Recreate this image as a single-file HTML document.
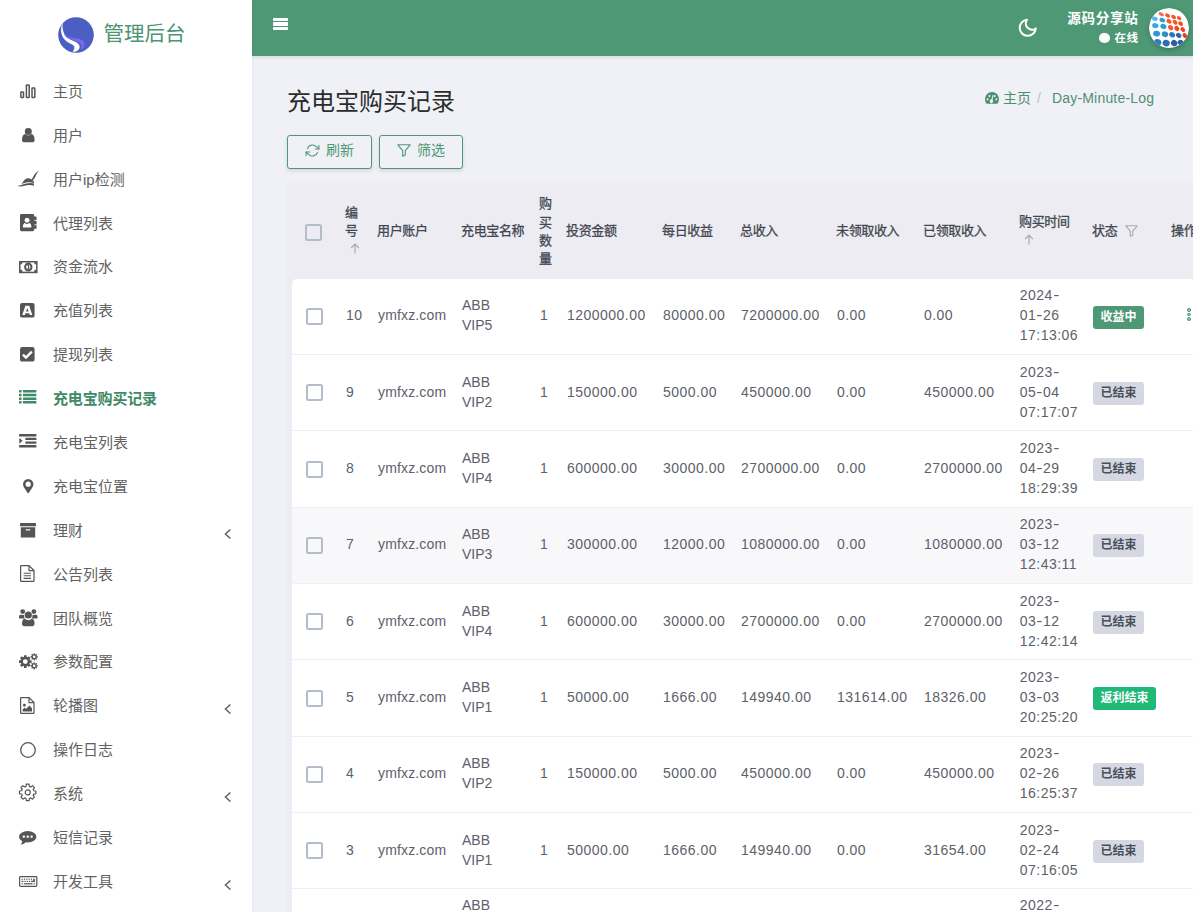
<!DOCTYPE html>
<html lang="zh-CN">
<head>
<meta charset="utf-8">
<title>充电宝购买记录</title>
<style>
*{box-sizing:border-box;margin:0;padding:0}
html,body{width:1193px;height:912px;overflow:hidden}
body{font-family:"Liberation Sans","Noto Sans CJK SC",sans-serif;font-size:14px;color:#414750;background:#eff1f7}
#page{position:relative;width:1193px;height:912px;overflow:hidden}
i{font-style:normal}
/* sidebar */
#side{position:absolute;left:0;top:0;width:252px;height:912px;background:#fff;box-shadow:0 0 4px rgba(40,50,80,.07)}
#logo{position:absolute;left:57.5px;top:16.5px;width:36px;height:36px}
#bt{position:absolute;left:103.4px;top:18.8px;font-size:20.5px;line-height:30px;color:#4c9473;white-space:nowrap}
#side .tx{position:absolute;left:53px;font-size:15px;line-height:22px;color:#626262;white-space:nowrap}
#side .tx.on{color:#3f8a67;font-weight:bold;letter-spacing:-.15px}
/* header */
#top{position:absolute;left:252px;top:0;width:941px;height:56px;background:#4e9876;box-shadow:0 1px 4px rgba(0,0,0,.12)}
#burger{position:absolute;left:20.6px;top:17.5px;width:15.4px;height:14px}
#burger i{display:block;height:3.3px;border-radius:.4px;background:#fff;margin-bottom:1.5px}
#uname{position:absolute;right:54.4px;top:10px;font-size:13.6px;letter-spacing:.7px;line-height:18px;font-weight:bold;color:#fff;white-space:nowrap}
#ustat{position:absolute;right:54.6px;top:29.8px;font-size:11.6px;letter-spacing:.4px;line-height:16px;font-weight:bold;color:#fff;white-space:nowrap}
#ustat i{display:inline-block;width:10.8px;height:10.8px;border-radius:50%;background:#fff;margin-right:4.4px;vertical-align:-1.7px}
#avatar{position:absolute;left:897px;top:8px;width:40px;height:40px;border-radius:50%;box-shadow:0 2px 5px rgba(0,0,0,.22)}
/* content */
#title{position:absolute;left:287px;top:84px;font-size:24px;line-height:36px;color:#2c2c2c;white-space:nowrap}
#crumb{position:absolute;left:985px;top:88px;width:200px;height:20px;font-size:14px;line-height:20px;color:#4c8f70;white-space:nowrap}
#crumb span{position:absolute;top:0}
#crumb .home{left:18px}
#crumb .sep{left:52px;color:#b8c0d0}
#crumb .cur{left:67px;color:#4f8f72;letter-spacing:.18px}
.btn{position:absolute;top:135px;height:34px;border:1px solid #4e9876;border-radius:3px;background:#f0f1f7;color:#4e9876;font-size:14px;box-shadow:0 2px 4px rgba(0,0,0,.12);white-space:nowrap}
.btn span{position:absolute;top:4.2px;line-height:20px}
/* table */
#tbl{position:absolute;left:287px;top:183px;width:920px;height:740px;background:#edecf2;border-radius:3px}
#rows{position:absolute;left:292px;top:279px;width:915px;height:700px;background:#fff;border-radius:5px 0 0 0;overflow:hidden}
#thead{position:absolute;left:0;top:0;width:1193px;height:0}
.th{position:absolute;font-size:13px;line-height:20px;font-weight:normal;-webkit-text-stroke:.28px #414750;color:#414750;white-space:nowrap;letter-spacing:-.35px}
.row{position:absolute;left:0;width:915px;border-bottom:1px solid #eef0f7}
.row.hv{background:#f8f8fa}
.c{position:absolute;font-size:14px;line-height:20px;color:#5d6169;white-space:nowrap}
.c.n{letter-spacing:.47px}
.c.u{letter-spacing:.15px}
.c i{letter-spacing:0;display:inline-block;margin:0 1.2px 0 .8px;transform:scaleX(1.3)}
.cb{position:absolute;width:17px;height:17px;border:2px solid #b3bdc9;border-radius:2.5px;background:transparent}
.bd{position:absolute;height:23px;border-radius:3px;font-size:12px;line-height:23.6px;font-weight:bold;padding:0 7.5px;white-space:nowrap}
.bd.g{background:#4e9876;color:#fff}
.bd.s{background:#21b978;color:#fff}
.bd.e{background:#d5d8e2;color:#4a505a}
.dot{display:block;width:3.5px;height:3.5px;border-radius:50%;border:1.35px solid #4a9270;background:#8fc0a8;margin-bottom:1.1px}
</style>
</head>
<body>
<div id="page">
<div id="tbl"></div>
<div id="rows">
<div class="row" style="top:0.0px;height:76px"><i class="cb" style="left:14px;top:29px"></i><span class="c n" style="left:54px;top:26.0px">10</span><span class="c u" style="left:86px;top:26.0px">ymfxz.com</span><span class="c" style="left:170px;top:16.0px">ABB</span><span class="c" style="left:170px;top:36.0px">VIP5</span><span class="c n" style="left:248px;top:26.0px">1</span><span class="c n" style="left:275px;top:26.0px">1200000.00</span><span class="c n" style="left:371px;top:26.0px">80000.00</span><span class="c n" style="left:449px;top:26.0px">7200000.00</span><span class="c n" style="left:545px;top:26.0px">0.00</span><span class="c n" style="left:632px;top:26.0px">0.00</span><span class="c n" style="left:727.8px;top:6.0px">2024<i>-</i></span><span class="c n" style="left:727.8px;top:26.0px">01<i>-</i>26</span><span class="c n" style="left:727.8px;top:46.0px">17:13:06</span><span class="bd g" style="left:801px;top:27px">收益中</span><span style="position:absolute;left:895px;top:29.3px;width:3.6px;height:14px"><i class="dot"></i><i class="dot"></i><i class="dot"></i></span></div>
<div class="row" style="top:76.0px;height:76px"><i class="cb" style="left:14px;top:29px"></i><span class="c n" style="left:54px;top:27.0px">9</span><span class="c u" style="left:86px;top:27.0px">ymfxz.com</span><span class="c" style="left:170px;top:17.0px">ABB</span><span class="c" style="left:170px;top:37.0px">VIP2</span><span class="c n" style="left:248px;top:27.0px">1</span><span class="c n" style="left:275px;top:27.0px">150000.00</span><span class="c n" style="left:371px;top:27.0px">5000.00</span><span class="c n" style="left:449px;top:27.0px">450000.00</span><span class="c n" style="left:545px;top:27.0px">0.00</span><span class="c n" style="left:632px;top:27.0px">450000.00</span><span class="c n" style="left:727.8px;top:7.0px">2023<i>-</i></span><span class="c n" style="left:727.8px;top:27.0px">05<i>-</i>04</span><span class="c n" style="left:727.8px;top:47.0px">07:17:07</span><span class="bd e" style="left:801px;top:27px">已结束</span></div>
<div class="row" style="top:152.0px;height:77px"><i class="cb" style="left:14px;top:30px"></i><span class="c n" style="left:54px;top:27.0px">8</span><span class="c u" style="left:86px;top:27.0px">ymfxz.com</span><span class="c" style="left:170px;top:17.0px">ABB</span><span class="c" style="left:170px;top:37.0px">VIP4</span><span class="c n" style="left:248px;top:27.0px">1</span><span class="c n" style="left:275px;top:27.0px">600000.00</span><span class="c n" style="left:371px;top:27.0px">30000.00</span><span class="c n" style="left:449px;top:27.0px">2700000.00</span><span class="c n" style="left:545px;top:27.0px">0.00</span><span class="c n" style="left:632px;top:27.0px">2700000.00</span><span class="c n" style="left:727.8px;top:7.0px">2023<i>-</i></span><span class="c n" style="left:727.8px;top:27.0px">04<i>-</i>29</span><span class="c n" style="left:727.8px;top:47.0px">18:29:39</span><span class="bd e" style="left:801px;top:27px">已结束</span></div>
<div class="row hv" style="top:229.0px;height:76px"><i class="cb" style="left:14px;top:29px"></i><span class="c n" style="left:54px;top:26.0px">7</span><span class="c u" style="left:86px;top:26.0px">ymfxz.com</span><span class="c" style="left:170px;top:16.0px">ABB</span><span class="c" style="left:170px;top:36.0px">VIP3</span><span class="c n" style="left:248px;top:26.0px">1</span><span class="c n" style="left:275px;top:26.0px">300000.00</span><span class="c n" style="left:371px;top:26.0px">12000.00</span><span class="c n" style="left:449px;top:26.0px">1080000.00</span><span class="c n" style="left:545px;top:26.0px">0.00</span><span class="c n" style="left:632px;top:26.0px">1080000.00</span><span class="c n" style="left:727.8px;top:6.0px">2023<i>-</i></span><span class="c n" style="left:727.8px;top:26.0px">03<i>-</i>12</span><span class="c n" style="left:727.8px;top:46.0px">12:43:11</span><span class="bd e" style="left:801px;top:26px">已结束</span></div>
<div class="row" style="top:305.0px;height:76px"><i class="cb" style="left:14px;top:29px"></i><span class="c n" style="left:54px;top:27.0px">6</span><span class="c u" style="left:86px;top:27.0px">ymfxz.com</span><span class="c" style="left:170px;top:17.0px">ABB</span><span class="c" style="left:170px;top:37.0px">VIP4</span><span class="c n" style="left:248px;top:27.0px">1</span><span class="c n" style="left:275px;top:27.0px">600000.00</span><span class="c n" style="left:371px;top:27.0px">30000.00</span><span class="c n" style="left:449px;top:27.0px">2700000.00</span><span class="c n" style="left:545px;top:27.0px">0.00</span><span class="c n" style="left:632px;top:27.0px">2700000.00</span><span class="c n" style="left:727.8px;top:7.0px">2023<i>-</i></span><span class="c n" style="left:727.8px;top:27.0px">03<i>-</i>12</span><span class="c n" style="left:727.8px;top:47.0px">12:42:14</span><span class="bd e" style="left:801px;top:27px">已结束</span></div>
<div class="row" style="top:381.0px;height:77px"><i class="cb" style="left:14px;top:30px"></i><span class="c n" style="left:54px;top:27.0px">5</span><span class="c u" style="left:86px;top:27.0px">ymfxz.com</span><span class="c" style="left:170px;top:17.0px">ABB</span><span class="c" style="left:170px;top:37.0px">VIP1</span><span class="c n" style="left:248px;top:27.0px">1</span><span class="c n" style="left:275px;top:27.0px">50000.00</span><span class="c n" style="left:371px;top:27.0px">1666.00</span><span class="c n" style="left:449px;top:27.0px">149940.00</span><span class="c n" style="left:545px;top:27.0px">131614.00</span><span class="c n" style="left:632px;top:27.0px">18326.00</span><span class="c n" style="left:727.8px;top:7.0px">2023<i>-</i></span><span class="c n" style="left:727.8px;top:27.0px">03<i>-</i>03</span><span class="c n" style="left:727.8px;top:47.0px">20:25:20</span><span class="bd s" style="left:801px;top:27px">返利结束</span></div>
<div class="row" style="top:458.0px;height:76px"><i class="cb" style="left:14px;top:29px"></i><span class="c n" style="left:54px;top:26.0px">4</span><span class="c u" style="left:86px;top:26.0px">ymfxz.com</span><span class="c" style="left:170px;top:16.0px">ABB</span><span class="c" style="left:170px;top:36.0px">VIP2</span><span class="c n" style="left:248px;top:26.0px">1</span><span class="c n" style="left:275px;top:26.0px">150000.00</span><span class="c n" style="left:371px;top:26.0px">5000.00</span><span class="c n" style="left:449px;top:26.0px">450000.00</span><span class="c n" style="left:545px;top:26.0px">0.00</span><span class="c n" style="left:632px;top:26.0px">450000.00</span><span class="c n" style="left:727.8px;top:6.0px">2023<i>-</i></span><span class="c n" style="left:727.8px;top:26.0px">02<i>-</i>26</span><span class="c n" style="left:727.8px;top:46.0px">16:25:37</span><span class="bd e" style="left:801px;top:26px">已结束</span></div>
<div class="row" style="top:534.0px;height:76px"><i class="cb" style="left:14px;top:29px"></i><span class="c n" style="left:54px;top:27.0px">3</span><span class="c u" style="left:86px;top:27.0px">ymfxz.com</span><span class="c" style="left:170px;top:17.0px">ABB</span><span class="c" style="left:170px;top:37.0px">VIP1</span><span class="c n" style="left:248px;top:27.0px">1</span><span class="c n" style="left:275px;top:27.0px">50000.00</span><span class="c n" style="left:371px;top:27.0px">1666.00</span><span class="c n" style="left:449px;top:27.0px">149940.00</span><span class="c n" style="left:545px;top:27.0px">0.00</span><span class="c n" style="left:632px;top:27.0px">31654.00</span><span class="c n" style="left:727.8px;top:7.0px">2023<i>-</i></span><span class="c n" style="left:727.8px;top:27.0px">02<i>-</i>24</span><span class="c n" style="left:727.8px;top:47.0px">07:16:05</span><span class="bd e" style="left:801px;top:27px">已结束</span></div>
<div class="row" style="top:610.0px;height:77px"><span class="c" style="left:170px;top:6.0px">ABB</span><span class="c n" style="left:727.8px;top:6.0px">2022<i>-</i></span></div>
</div>
<div id="thead">
<i class="cb" style="left:305px;top:224px"></i>
<span class="th" style="left:345px;top:203px">编</span>
<span class="th" style="left:345px;top:221.4px">号</span>
<span class="th" style="left:377px;top:221.4px">用户账户</span>
<span class="th" style="left:461px;top:221.4px">充电宝名称</span>
<span class="th" style="left:539px;top:194.4px">购</span>
<span class="th" style="left:539px;top:212.6px">买</span>
<span class="th" style="left:539px;top:231px">数</span>
<span class="th" style="left:539px;top:249.4px">量</span>
<span class="th" style="left:566px;top:221.4px">投资金额</span>
<span class="th" style="left:662px;top:221.4px">每日收益</span>
<span class="th" style="left:740px;top:221.4px">总收入</span>
<span class="th" style="left:836px;top:221.4px">未领取收入</span>
<span class="th" style="left:923px;top:221.4px">已领取收入</span>
<span class="th" style="left:1019px;top:212.4px">购买时间</span>
<span class="th" style="left:1092px;top:221.4px">状态</span>
<span class="th" style="left:1171px;top:221.4px">操作</span>
<svg style="position:absolute;left:350px;top:243px;width:10px;height:11px;overflow:visible" viewBox="0 0 10 11" ><path d="M5 10.5 V1.2 M1.2 5 L5 1.2 L8.8 5" fill="none" stroke="#a4abb9" stroke-width="1.2"/></svg>
<svg style="position:absolute;left:1024px;top:234.3px;width:10px;height:11px;overflow:visible" viewBox="0 0 10 11" ><path d="M5 10.5 V1.2 M1.2 5 L5 1.2 L8.8 5" fill="none" stroke="#a4abb9" stroke-width="1.2"/></svg>
<svg style="position:absolute;left:1125px;top:225px;width:13px;height:12px;overflow:visible" viewBox="0 0 13 12" ><path d="M0.8 0.8 H12.2 L7.7 6.2 V10.2 L5.3 11.2 V6.2Z" fill="none" stroke="#a4abb9" stroke-width="1.1" stroke-linejoin="round"/></svg>
</div>
<div id="title">充电宝购买记录</div>
<div id="crumb"><svg style="position:absolute;left:0px;top:4px;width:14px;height:12px;overflow:visible" viewBox="0 0 14 12" class="ci"><path fill="#4c8f70" fill-rule="evenodd" d="M7 0 A7 7 0 0 1 14 7 C14 8.6 13.5 10 12.7 11.2 Q12.3 11.8 11.6 11.8 H2.4 Q1.7 11.8 1.3 11.2 C0.5 10 0 8.6 0 7 A7 7 0 0 1 7 0Z M2.6 6.2 a1 1 0 1 0 0.01 0Z M4.4 2.9 a1 1 0 1 0 0.01 0Z M11.4 6.2 a1 1 0 1 0 0.01 0Z M9.6 2.9 a1 1 0 1 0 0.01 0Z M7.6 3 L6.3 7.6 a1.7 1.7 0 1 0 1.2 0.3 L8.4 3.2Z"/></svg><span class="home">主页</span><span class="sep">/</span><span class="cur">Day-Minute-Log</span></div>
<div class="btn" style="left:287px;width:85px"><svg style="position:absolute;left:17px;top:8.3px;width:15px;height:13px;overflow:visible" viewBox="0 0 15 13" ><g fill="none" stroke="#4e9876" stroke-width="1.1" stroke-linecap="round" stroke-linejoin="round"><path d="M13.9 1.4 V5 H10.3"/><path d="M1.1 11.6 V8 H4.7"/><path d="M2.4 4.6 A5.4 5.4 0 0 1 11.4 2.7 L13.9 5"/><path d="M12.6 8.4 A5.4 5.4 0 0 1 3.6 10.3 L1.1 8"/></g></svg><span style="left:38px">刷新</span></div>
<div class="btn" style="left:379px;width:84px"><svg style="position:absolute;left:16.5px;top:8.3px;width:14px;height:13px;overflow:visible" viewBox="0 0 14 13" ><path d="M0.8 0.8 H13.2 L8.3 6.6 V11 L5.7 12.2 V6.6Z" fill="none" stroke="#4e9876" stroke-width="1.1" stroke-linejoin="round"/></svg><span style="left:37px">筛选</span></div>
<div id="top">
  <div id="burger"><i></i><i></i><i></i></div>
  <svg style="position:absolute;left:765px;top:17.2px;width:21.5px;height:21.5px;overflow:visible" viewBox="0 0 24 24" ><path d="M21 12.79A9 9 0 1 1 11.21 3 7 7 0 0 0 21 12.79z" fill="none" stroke="#fff" stroke-width="2.3" stroke-linejoin="round" stroke-linecap="round"/></svg>
  <div id="uname">源码分享站</div>
  <div id="ustat"><i></i>在线</div>
  <svg id="avatar" viewBox="0 0 40 40"><defs><clipPath id="avc"><circle cx="20" cy="20" r="20"/></clipPath></defs><g clip-path="url(#avc)"><rect width="40" height="40" fill="#fff"/><ellipse cx="12.3" cy="6.2" rx="2.9" ry="1.7" fill="#f3714a" transform="rotate(28 12.3 6.2)"/><ellipse cx="18.6" cy="7.5" rx="2.8" ry="1.8" fill="#f25a30" transform="rotate(32 18.6 7.5)"/><ellipse cx="24.6" cy="9.0" rx="2.7" ry="1.8" fill="#f2552b" transform="rotate(34 24.6 9.0)"/><ellipse cx="30.1" cy="10.2" rx="2.5" ry="1.7" fill="#f25a30" transform="rotate(36 30.1 10.2)"/><ellipse cx="5.8" cy="10.8" rx="3.0" ry="2.1" fill="#56b7e8" transform="rotate(15 5.8 10.8)"/><ellipse cx="13.3" cy="12.1" rx="2.9" ry="2.1" fill="#27a0da" transform="rotate(22 13.3 12.1)"/><ellipse cx="20" cy="13.3" rx="2.8" ry="2.1" fill="#f25c33" transform="rotate(35 20 13.3)"/><ellipse cx="26.1" cy="14.3" rx="2.7" ry="2.0" fill="#f2552b" transform="rotate(40 26.1 14.3)"/><ellipse cx="31.6" cy="15.7" rx="2.6" ry="1.9" fill="#f04a22" transform="rotate(42 31.6 15.7)"/><ellipse cx="6.3" cy="17.6" rx="3.2" ry="2.5" fill="#38a7de" transform="rotate(12 6.3 17.6)"/><ellipse cx="14.4" cy="18.5" rx="3.1" ry="2.5" fill="#2a9bd6" transform="rotate(25 14.4 18.5)"/><ellipse cx="21.6" cy="19.6" rx="2.9" ry="2.3" fill="#ef5a32" transform="rotate(38 21.6 19.6)"/><ellipse cx="27.8" cy="20.5" rx="2.8" ry="2.2" fill="#f04a22" transform="rotate(42 27.8 20.5)"/><ellipse cx="33.8" cy="21.6" rx="2.7" ry="2.0" fill="#ee4420" transform="rotate(45 33.8 21.6)"/><ellipse cx="7.6" cy="25.6" rx="3.5" ry="2.9" fill="#2c98d4" transform="rotate(10 7.6 25.6)"/><ellipse cx="16" cy="26.2" rx="3.3" ry="2.8" fill="#2d8fcb" transform="rotate(25 16 26.2)"/><ellipse cx="23.2" cy="26.8" rx="3.1" ry="2.5" fill="#2b74b8" transform="rotate(35 23.2 26.8)"/><ellipse cx="29.7" cy="27.4" rx="2.9" ry="2.3" fill="#2c66a8" transform="rotate(42 29.7 27.4)"/><ellipse cx="35.9" cy="27.7" rx="2.8" ry="2.0" fill="#f2391a" transform="rotate(48 35.9 27.7)"/><ellipse cx="8.6" cy="34.5" rx="3.8" ry="3.4" fill="#2b80c4" transform="rotate(20 8.6 34.5)"/><ellipse cx="17.2" cy="35.1" rx="3.6" ry="3.3" fill="#2b6eb4" transform="rotate(20 17.2 35.1)"/><ellipse cx="25.2" cy="35.1" rx="3.3" ry="3.0" fill="#2b5ea6" transform="rotate(30 25.2 35.1)"/><ellipse cx="31.6" cy="34.5" rx="2.9" ry="2.6" fill="#2e62aa" transform="rotate(35 31.6 34.5)"/></g></svg>
</div>
<div id="side">
  <svg id="logo" viewBox="0 0 36 36"><circle cx="18" cy="18" r="17.8" fill="#4b5ec1"/><path d="M4.6 5.6 C1 14 3.6 23.2 12.6 26.8 C16.6 28.4 17.8 30.8 14.6 34.8 C20.4 34.8 23.2 30.8 20.8 27.4 C18.2 24 10.6 23.6 7.2 18.6 C4.8 14.8 4 10 4.6 5.6Z" fill="#fff"/><path d="M5.6 17 C8.6 22.6 16.2 22.8 21 25.6 C23.8 27.4 24.4 30 22.6 33.2 C26.6 30.8 27.8 26 24.8 23.4 C20.6 20.4 10.6 22 5.6 17Z" fill="#7b68ee"/></svg>
  <span id="bt">管理后台</span>
<svg style="position:absolute;left:20px;top:83.5px;width:16px;height:14.5px;overflow:visible" viewBox="0 0 16 14.5" ><g fill="none" stroke="#555" stroke-width="1.5"><rect x="0.9" y="7.9" width="2.6" height="5.7" rx=".6"/><rect x="6.4" y="0.9" width="2.8" height="12.7" rx=".6"/><rect x="12" y="4" width="2.8" height="9.6" rx=".6"/></g></svg>
<div class="tx" style="top:80.8px">主页</div>
<svg style="position:absolute;left:21.7px;top:127.5px;width:12.6px;height:14.3px;overflow:visible" viewBox="0 0 12.6 14.3" ><g fill="#555"><circle cx="6.3" cy="3.6" r="3.5"/><path d="M0 12 C0 8.2 1.2 6.3 3.2 6 C4 6.9 5.1 7.4 6.3 7.4 C7.5 7.4 8.6 6.9 9.4 6 C11.4 6.3 12.6 8.2 12.6 12 C12.6 13.5 11.7 14.3 10.4 14.3 L2.2 14.3 C0.9 14.3 0 13.5 0 12Z"/></g></svg>
<div class="tx" style="top:124.7px">用户</div>
<svg style="position:absolute;left:16.5px;top:169.5px;width:22.5px;height:16.5px;overflow:visible" viewBox="0 0 22.5 16.5" ><g fill="#555"><path d="M4.6 13.9 C6.3 11.6 7.8 8.6 10.8 8.3 C13.6 8.2 15.7 10.1 17.1 12 L16.7 13 C12.8 11.7 8.6 12.3 4.6 13.9Z"/><path d="M0.1 15.9 C4 15.6 6.5 14.3 9 13.6 C11.8 12.8 14.8 12.9 17.1 13.6 L16.8 15.8 C14 14.7 10.5 14.9 7.5 15.8 C4.5 16.6 2 16.5 0.1 15.9Z"/><path d="M14.3 9.7 C15.8 8.2 16.4 5.8 17.9 3.9 C19.1 2.4 20.5 1.2 22.3 0.4 C20.6 2 19.7 3.5 19 5.2 C18.2 7.1 17.2 9 15.5 10.6Z"/></g></svg>
<div class="tx" style="top:168.6px">用户ip检测</div>
<svg style="position:absolute;left:19.8px;top:214px;width:16.6px;height:17.2px;overflow:visible" viewBox="0 0 16.6 17.2" ><path fill="#555" d="M1.4 0 H12.8 Q14.2 0 14.2 1.4 V15.8 Q14.2 17.2 12.8 17.2 H1.4 Q0 17.2 0 15.8 V1.4 Q0 0 1.4 0Z M14 2.6 h2 q.6 0 .6 .6 v2.4 q0 .6 -.6 .6 h-2Z M14 6.9 h2 q.6 0 .6 .6 v2.4 q0 .6 -.6 .6 h-2Z M14 11.2 h2 q.6 0 .6 .6 v2.4 q0 .6 -.6 .6 h-2Z"/><g fill="#fff"><circle cx="7.1" cy="6.2" r="2.5"/><path d="M2.8 13 C2.8 10.6 3.8 9.3 5 9.1 C5.6 9.7 6.3 10 7.1 10 C7.9 10 8.6 9.7 9.2 9.1 C10.4 9.3 11.4 10.6 11.4 13 Q11.4 13.6 10.8 13.6 H3.4 Q2.8 13.6 2.8 13Z"/></g></svg>
<div class="tx" style="top:212.5px">代理列表</div>
<svg style="position:absolute;left:18.8px;top:260.8px;width:18.6px;height:12.2px;overflow:visible" viewBox="0 0 18.6 12.2" ><g><rect x="0.75" y="0.75" width="17.1" height="10.7" fill="none" stroke="#555" stroke-width="1.5"/><path fill="#555" d="M1.2 1.2 h2.4 a2.4 2.4 0 0 1 -2.4 2.4Z M17.4 1.2 v2.4 a2.4 2.4 0 0 1 -2.4 -2.4Z M1.2 11 v-2.4 a2.4 2.4 0 0 1 2.4 2.4Z M17.4 11 h-2.4 a2.4 2.4 0 0 1 2.4 -2.4Z"/><ellipse cx="9.3" cy="6.1" rx="3.2" ry="3.5" fill="none" stroke="#555" stroke-width="2"/><path d="M8.5 4.8 l1.1 -0.7 v3.6 M8.4 7.8 h2.1" fill="none" stroke="#555" stroke-width="1.1"/></g></svg>
<div class="tx" style="top:256.4px">资金流水</div>
<svg style="position:absolute;left:20.4px;top:302.8px;width:14.6px;height:14.6px;overflow:visible" viewBox="0 0 14.6 14.6" ><rect width="14.6" height="14.6" rx="2.2" fill="#555"/><path fill="#fff" fill-rule="evenodd" d="M5.4 2.7 H9.2 L12.3 11.9 H9.8 L9.3 10.2 H5.3 L4.8 11.9 H2.3Z M7.3 4.9 L6 8.5 H8.6Z"/></svg>
<div class="tx" style="top:300.2px">充值列表</div>
<svg style="position:absolute;left:20.4px;top:346.8px;width:14.6px;height:14.6px;overflow:visible" viewBox="0 0 14.6 14.6" ><rect width="14.6" height="14.6" rx="2.2" fill="#555"/><path fill="none" stroke="#fff" stroke-width="2.4" d="M2.9 7.6 L6 10.6 L11.8 4.6"/></svg>
<div class="tx" style="top:344.1px">提现列表</div>
<svg style="position:absolute;left:18.9px;top:390.2px;width:17.4px;height:13.6px;overflow:visible" viewBox="0 0 17.4 13.6" ><g fill="#3f8a67"><rect x="0" y="0.0" width="2.6" height="2.5" rx=".4"/><rect x="4" y="0.0" width="13.4" height="2.5" rx=".4"/><rect x="0" y="3.7" width="2.6" height="2.5" rx=".4"/><rect x="4" y="3.7" width="13.4" height="2.5" rx=".4"/><rect x="0" y="7.4" width="2.6" height="2.5" rx=".4"/><rect x="4" y="7.4" width="13.4" height="2.5" rx=".4"/><rect x="0" y="11.1" width="2.6" height="2.5" rx=".4"/><rect x="4" y="11.1" width="13.4" height="2.5" rx=".4"/></g></svg>
<div class="tx on" style="top:388.0px">充电宝购买记录</div>
<svg style="position:absolute;left:18.9px;top:434.2px;width:17.4px;height:13.6px;overflow:visible" viewBox="0 0 17.4 13.6" ><g fill="#555"><rect x="0" y="0" width="17.4" height="2.4" rx=".4"/><rect x="6.4" y="3.7" width="11" height="2.4" rx=".4"/><rect x="6.4" y="7.4" width="11" height="2.4" rx=".4"/><rect x="0" y="11.1" width="17.4" height="2.4" rx=".4"/><path d="M0.3 3.9 L3.6 6.8 L0.3 9.7Z"/></g></svg>
<div class="tx" style="top:431.9px">充电宝列表</div>
<svg style="position:absolute;left:22.8px;top:479px;width:10.4px;height:14.2px;overflow:visible" viewBox="0 0 10.4 14.2" ><path fill="#555" fill-rule="evenodd" d="M5.2 0 A5.2 5.2 0 0 1 10.4 5.2 C10.4 6.4 10 7.2 9.5 8.2 L6.1 13.6 Q5.2 14.8 4.3 13.6 L0.9 8.2 C0.4 7.2 0 6.4 0 5.2 A5.2 5.2 0 0 1 5.2 0Z M5.2 2.6 A2.6 2.6 0 1 0 5.2 7.8 A2.6 2.6 0 1 0 5.2 2.6Z"/></svg>
<div class="tx" style="top:475.8px">充电宝位置</div>
<svg style="position:absolute;left:19.8px;top:523px;width:16px;height:14.6px;overflow:visible" viewBox="0 0 16 14.6" ><g fill="#555"><rect x="0" y="0" width="16" height="3.2" rx=".4"/><path fill-rule="evenodd" d="M0.8 4.2 H15.2 V14 Q15.2 14.6 14.6 14.6 H1.4 Q0.8 14.6 0.8 14Z M6.2 6.2 Q5.6 6.2 5.6 6.8 Q5.6 7.4 6.2 7.4 H9.8 Q10.4 7.4 10.4 6.8 Q10.4 6.2 9.8 6.2Z"/></g></svg>
<div class="tx" style="top:519.7px">理财</div>
<svg style="position:absolute;left:224px;top:528.5px;width:8px;height:10px;overflow:visible" viewBox="0 0 8 10" ><path d="M6.4 0.6 L1.4 5 L6.4 9.4" fill="none" stroke="#555" stroke-width="1.3"/></svg>
<svg style="position:absolute;left:20px;top:565.3px;width:14.6px;height:17px;overflow:visible" viewBox="0 0 14.6 17" ><g fill="none" stroke="#555" stroke-width="1.2"><path d="M1.2 0.6 H9 L14 5.6 V15.8 Q14 16.4 13.4 16.4 H1.2 Q0.6 16.4 0.6 15.8 V1.2 Q0.6 0.6 1.2 0.6Z"/><path d="M9 0.8 V5.6 H13.8"/><path d="M3.6 8.2 H11 M3.6 10.8 H11 M3.6 13.4 H11" stroke-width="1.1"/></g></svg>
<div class="tx" style="top:563.6px">公告列表</div>
<svg style="position:absolute;left:18.6px;top:609.3px;width:18.6px;height:17.2px;overflow:visible" viewBox="0 0 18.6 17.2" ><g fill="#555"><circle cx="3.7" cy="2.6" r="2.4"/><circle cx="14.9" cy="2.6" r="2.4"/><circle cx="9.3" cy="6" r="3.6"/><path d="M0 8.4 C0 6.4 .8 5.6 2 5.5 C3 6.2 4.2 6.3 5.2 5.8 C4.9 7.2 5.2 8.6 6 9.6 H1.4 Q0 9.6 0 8.4Z"/><path d="M18.6 8.4 C18.6 6.4 17.8 5.6 16.6 5.5 C15.6 6.2 14.4 6.3 13.4 5.8 C13.7 7.2 13.4 8.6 12.6 9.6 H17.2 Q18.6 9.6 18.6 8.4Z"/><path d="M3 14.8 C3 11.4 4.2 9.9 5.8 9.8 C6.8 10.7 8 11.2 9.3 11.2 C10.6 11.2 11.8 10.7 12.8 9.8 C14.4 9.9 15.6 11.4 15.6 14.8 C15.6 16.4 14.6 17.2 13.2 17.2 H5.4 C4 17.2 3 16.4 3 14.8Z"/></g></svg>
<div class="tx" style="top:607.5px">团队概览</div>
<svg style="position:absolute;left:18.6px;top:653.2px;width:18.8px;height:16.6px;overflow:visible" viewBox="0 0 18.8 16.6" ><g fill="#555"><rect x="-1.35" y="-6.30" width="2.70" height="2.30" rx=".3" transform="translate(6.3 8.6) rotate(0.0)"/><rect x="-1.35" y="-6.30" width="2.70" height="2.30" rx=".3" transform="translate(6.3 8.6) rotate(45.0)"/><rect x="-1.35" y="-6.30" width="2.70" height="2.30" rx=".3" transform="translate(6.3 8.6) rotate(90.0)"/><rect x="-1.35" y="-6.30" width="2.70" height="2.30" rx=".3" transform="translate(6.3 8.6) rotate(135.0)"/><rect x="-1.35" y="-6.30" width="2.70" height="2.30" rx=".3" transform="translate(6.3 8.6) rotate(180.0)"/><rect x="-1.35" y="-6.30" width="2.70" height="2.30" rx=".3" transform="translate(6.3 8.6) rotate(225.0)"/><rect x="-1.35" y="-6.30" width="2.70" height="2.30" rx=".3" transform="translate(6.3 8.6) rotate(270.0)"/><rect x="-1.35" y="-6.30" width="2.70" height="2.30" rx=".3" transform="translate(6.3 8.6) rotate(315.0)"/></g><circle cx="6.3" cy="8.6" r="3.6" fill="none" stroke="#555" stroke-width="2.3"/><g fill="#555"><rect x="-0.70" y="-3.60" width="1.40" height="1.60" rx=".3" transform="translate(15.2 3.8) rotate(0.0)"/><rect x="-0.70" y="-3.60" width="1.40" height="1.60" rx=".3" transform="translate(15.2 3.8) rotate(45.0)"/><rect x="-0.70" y="-3.60" width="1.40" height="1.60" rx=".3" transform="translate(15.2 3.8) rotate(90.0)"/><rect x="-0.70" y="-3.60" width="1.40" height="1.60" rx=".3" transform="translate(15.2 3.8) rotate(135.0)"/><rect x="-0.70" y="-3.60" width="1.40" height="1.60" rx=".3" transform="translate(15.2 3.8) rotate(180.0)"/><rect x="-0.70" y="-3.60" width="1.40" height="1.60" rx=".3" transform="translate(15.2 3.8) rotate(225.0)"/><rect x="-0.70" y="-3.60" width="1.40" height="1.60" rx=".3" transform="translate(15.2 3.8) rotate(270.0)"/><rect x="-0.70" y="-3.60" width="1.40" height="1.60" rx=".3" transform="translate(15.2 3.8) rotate(315.0)"/><rect x="-0.70" y="-3.60" width="1.40" height="1.60" rx=".3" transform="translate(15.2 12.8) rotate(0.0)"/><rect x="-0.70" y="-3.60" width="1.40" height="1.60" rx=".3" transform="translate(15.2 12.8) rotate(45.0)"/><rect x="-0.70" y="-3.60" width="1.40" height="1.60" rx=".3" transform="translate(15.2 12.8) rotate(90.0)"/><rect x="-0.70" y="-3.60" width="1.40" height="1.60" rx=".3" transform="translate(15.2 12.8) rotate(135.0)"/><rect x="-0.70" y="-3.60" width="1.40" height="1.60" rx=".3" transform="translate(15.2 12.8) rotate(180.0)"/><rect x="-0.70" y="-3.60" width="1.40" height="1.60" rx=".3" transform="translate(15.2 12.8) rotate(225.0)"/><rect x="-0.70" y="-3.60" width="1.40" height="1.60" rx=".3" transform="translate(15.2 12.8) rotate(270.0)"/><rect x="-0.70" y="-3.60" width="1.40" height="1.60" rx=".3" transform="translate(15.2 12.8) rotate(315.0)"/></g><circle cx="15.2" cy="3.8" r="1.9" fill="none" stroke="#555" stroke-width="1.2"/><circle cx="15.2" cy="12.8" r="1.9" fill="none" stroke="#555" stroke-width="1.2"/></svg>
<div class="tx" style="top:651.4px">参数配置</div>
<svg style="position:absolute;left:20px;top:697.2px;width:14.6px;height:17px;overflow:visible" viewBox="0 0 14.6 17" ><g fill="none" stroke="#555" stroke-width="1.2"><path d="M1.2 0.6 H9 L14 5.6 V15.8 Q14 16.4 13.4 16.4 H1.2 Q0.6 16.4 0.6 15.8 V1.2 Q0.6 0.6 1.2 0.6Z"/><path d="M9 0.8 V5.6 H13.8"/></g><g fill="#555"><circle cx="4.4" cy="8.2" r="1.4"/><path d="M2.6 14.4 V12.6 L4.6 10.6 L6 12 L9.4 8.6 L12 11.2 V14.4Z"/></g></svg>
<div class="tx" style="top:695.3px">轮播图</div>
<svg style="position:absolute;left:224px;top:704.0600000000001px;width:8px;height:10px;overflow:visible" viewBox="0 0 8 10" ><path d="M6.4 0.6 L1.4 5 L6.4 9.4" fill="none" stroke="#555" stroke-width="1.3"/></svg>
<svg style="position:absolute;left:19.8px;top:741.5px;width:16px;height:16px;overflow:visible" viewBox="0 0 16 16" ><circle cx="8" cy="8" r="7.3" fill="none" stroke="#555" stroke-width="1.3"/></svg>
<div class="tx" style="top:739.1px">操作日志</div>
<svg style="position:absolute;left:18.9px;top:784px;width:17.4px;height:16.8px;overflow:visible" viewBox="0 0 17.4 16.8" ><path d="M7.30 0.22 L10.10 0.22 L10.34 2.32 L11.85 2.94 L13.49 1.62 L15.48 3.61 L14.16 5.26 L14.78 6.77 L16.88 7.00 L16.88 9.80 L14.78 10.04 L14.16 11.55 L15.48 13.19 L13.49 15.18 L11.84 13.86 L10.33 14.48 L10.10 16.58 L7.30 16.58 L7.06 14.48 L5.55 13.86 L3.91 15.18 L1.92 13.19 L3.24 11.54 L2.62 10.03 L0.52 9.80 L0.52 7.00 L2.62 6.76 L3.24 5.25 L1.92 3.61 L3.91 1.62 L5.56 2.94 L7.07 2.32Z" fill="none" stroke="#555" stroke-width="1.2" stroke-linejoin="round"/><circle cx="8.7" cy="8.4" r="2.5" fill="none" stroke="#555" stroke-width="1.2"/></svg>
<div class="tx" style="top:783.0px">系统</div>
<svg style="position:absolute;left:224px;top:791.84px;width:8px;height:10px;overflow:visible" viewBox="0 0 8 10" ><path d="M6.4 0.6 L1.4 5 L6.4 9.4" fill="none" stroke="#555" stroke-width="1.3"/></svg>
<svg style="position:absolute;left:18.9px;top:831px;width:17.4px;height:13.8px;overflow:visible" viewBox="0 0 17.4 13.8" ><g fill="#555"><ellipse cx="8.7" cy="5.7" rx="8.7" ry="5.7"/><path d="M3.2 9 C3.4 11 2.6 12.6 1.4 13.6 C4 13.6 6 12.4 7.2 10.6Z"/></g><g fill="#fff"><rect x="3.7" y="4.6" width="2.2" height="2.2" rx=".5"/><rect x="7.6" y="4.6" width="2.2" height="2.2" rx=".5"/><rect x="11.5" y="4.6" width="2.2" height="2.2" rx=".5"/></g></svg>
<div class="tx" style="top:826.9px">短信记录</div>
<svg style="position:absolute;left:18.9px;top:876px;width:18.4px;height:11px;overflow:visible" viewBox="0 0 18.4 11" ><rect x=".6" y=".6" width="17.2" height="9.8" rx=".8" fill="none" stroke="#555" stroke-width="1.2"/><g fill="#555"><rect x="2.6" y="2.6" width="1.2" height="1.2"/><rect x="4.9" y="2.6" width="1.2" height="1.2"/><rect x="7.2" y="2.6" width="1.2" height="1.2"/><rect x="9.5" y="2.6" width="1.2" height="1.2"/><rect x="11.8" y="2.6" width="1.2" height="1.2"/><rect x="14.2" y="2.6" width="1.6" height="3.4"/><rect x="2.6" y="4.8" width="1.8" height="1.2"/><rect x="5.4" y="4.8" width="1.2" height="1.2"/><rect x="7.6" y="4.8" width="1.2" height="1.2"/><rect x="9.8" y="4.8" width="1.2" height="1.2"/><rect x="12" y="4.8" width="1.2" height="1.2"/><rect x="13" y="4.8" width="2.8" height="1.2"/><rect x="2.6" y="7.2" width="1.2" height="1.2"/><rect x="4.9" y="7.2" width="8.6" height="1.2"/><rect x="14.6" y="7.2" width="1.2" height="1.2"/></g></svg>
<div class="tx" style="top:870.8px">开发工具</div>
<svg style="position:absolute;left:224px;top:879.62px;width:8px;height:10px;overflow:visible" viewBox="0 0 8 10" ><path d="M6.4 0.6 L1.4 5 L6.4 9.4" fill="none" stroke="#555" stroke-width="1.3"/></svg>
</div>
</div>
</body>
</html>
